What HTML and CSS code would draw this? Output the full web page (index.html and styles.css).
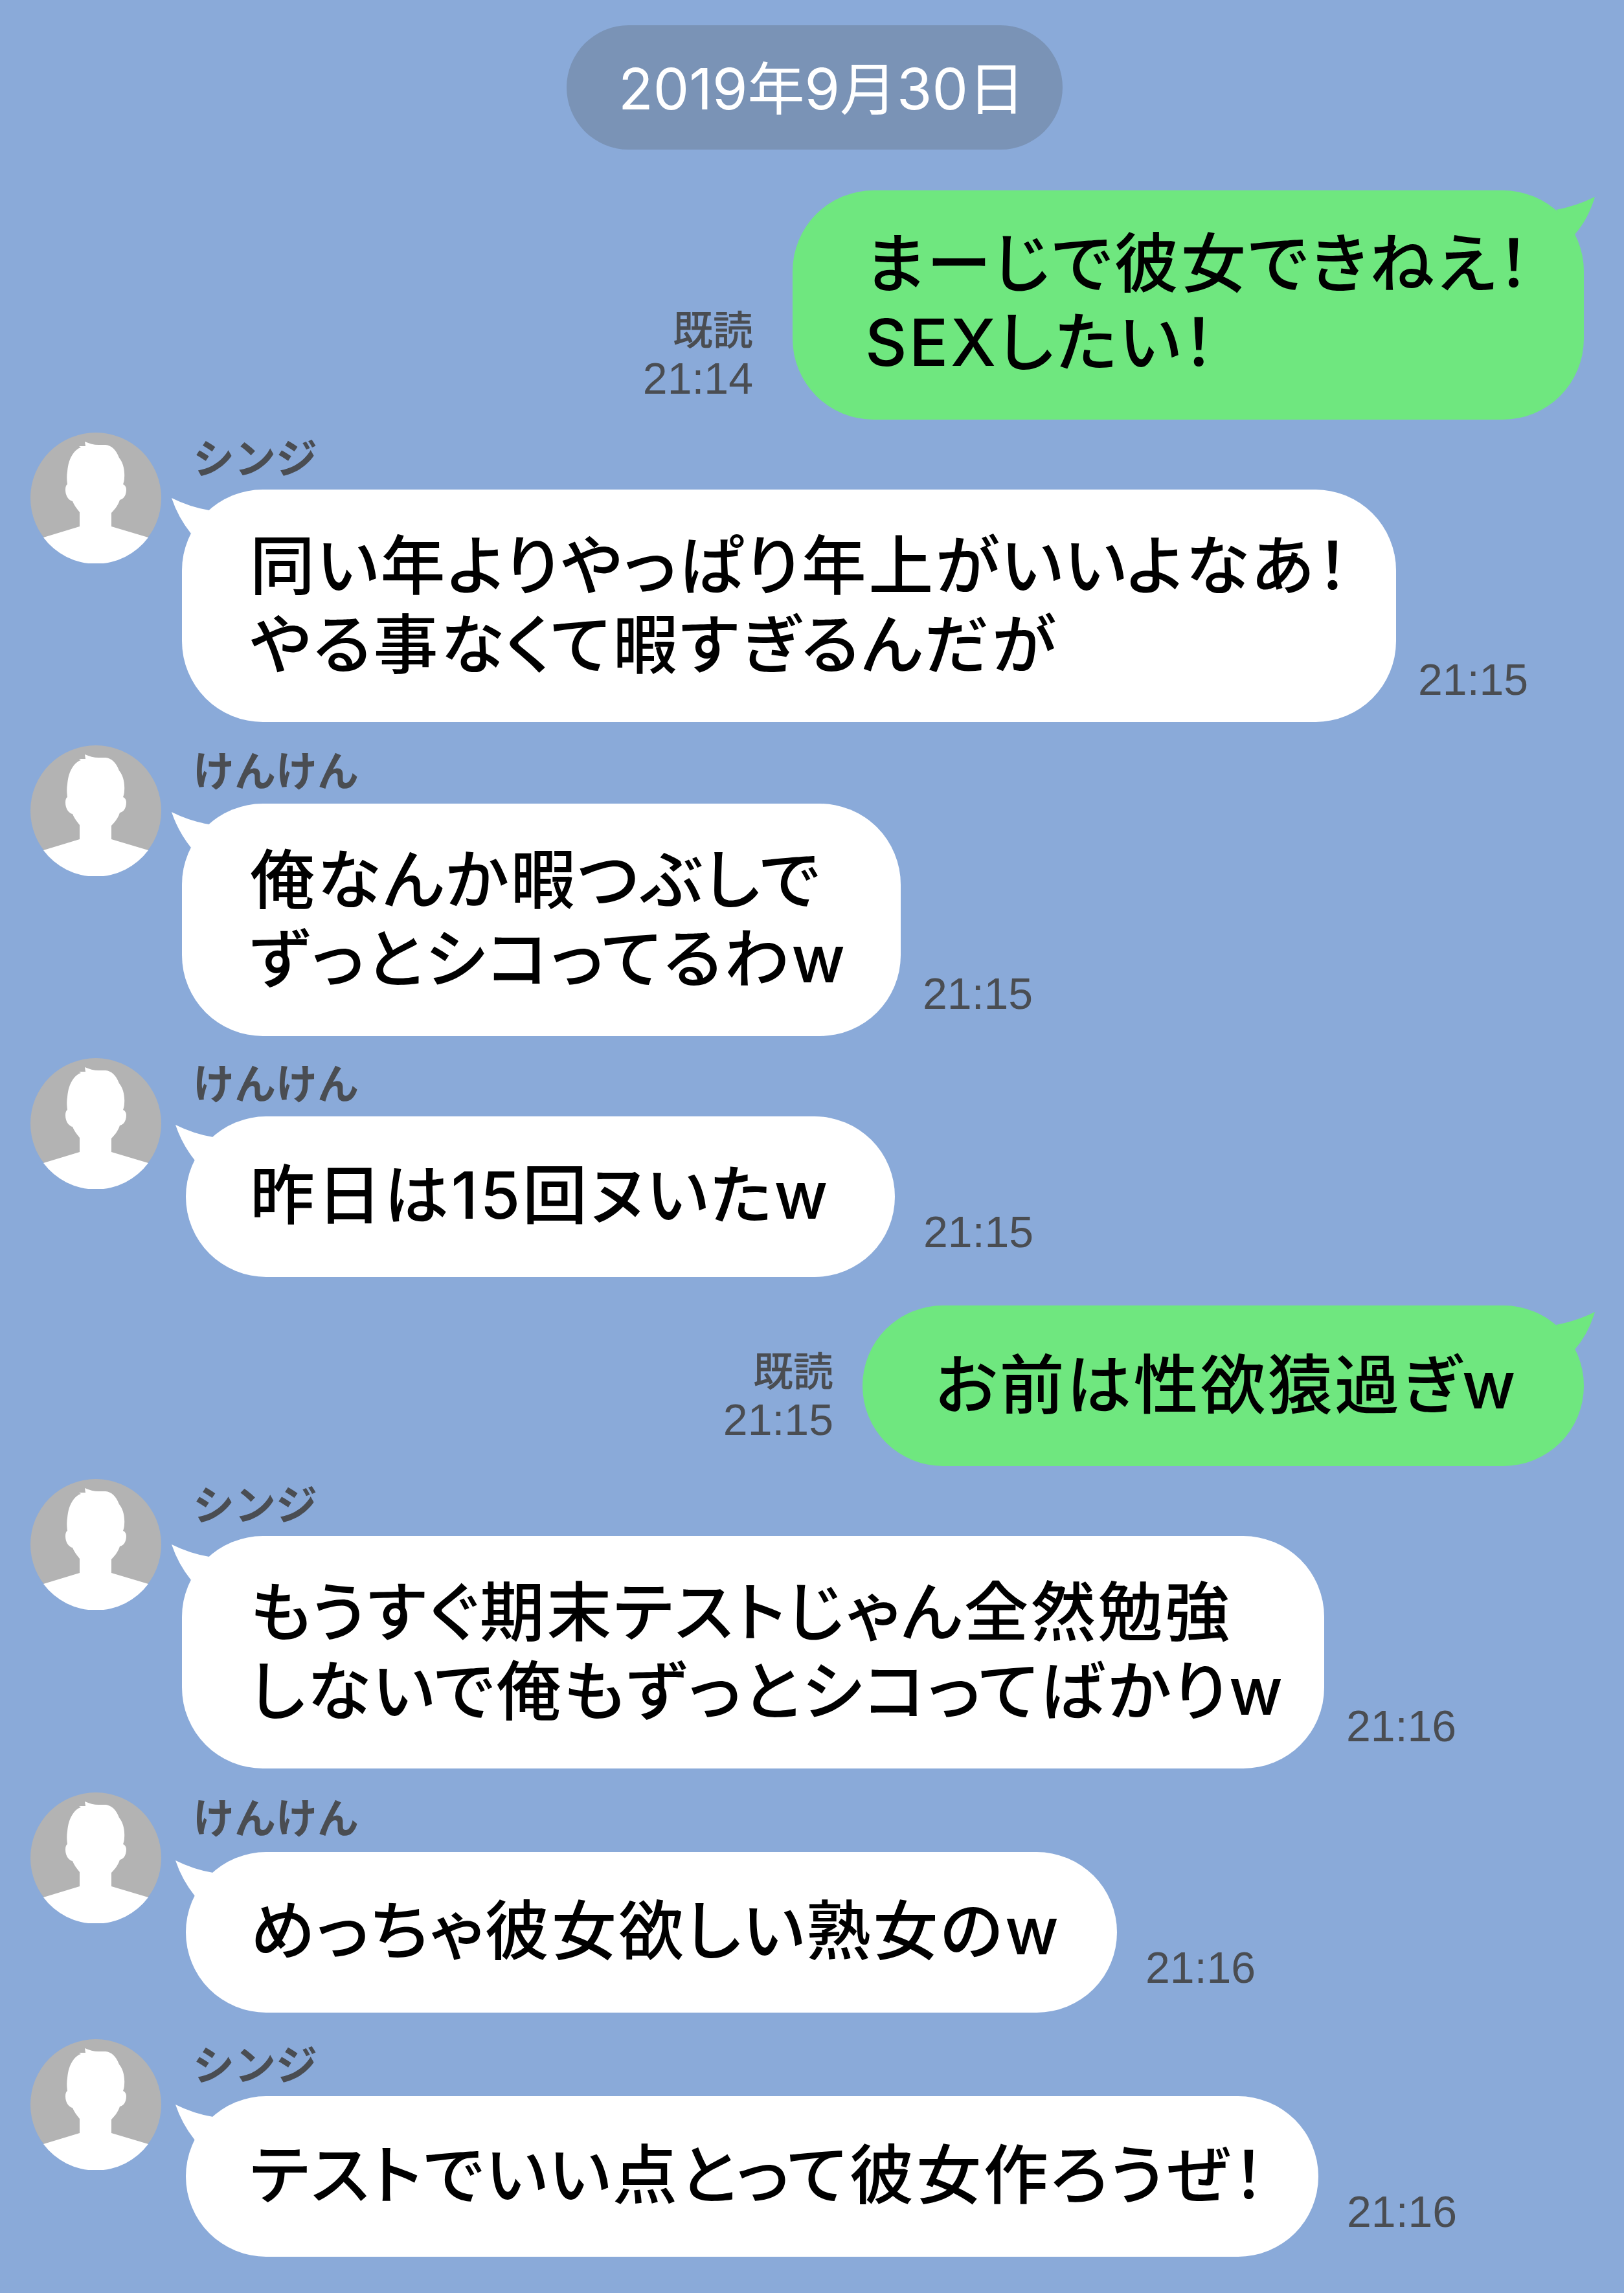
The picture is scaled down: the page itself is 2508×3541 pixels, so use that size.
FILE: index.html
```html
<!DOCTYPE html>
<html lang="ja">
<head>
    <meta charset="UTF-8">
    <title>トーク</title>
    <link rel="stylesheet" href="styles.css">
</head>
<body>
    <svg class="defs" width="0" height="0">
        <defs>
            <g id="person">
                <circle cx="101" cy="101" r="101" fill="#b3b3b3"/>
                <path fill="#fff" d="M20 162 L76 145 L76 123 C71 117 67 111 65 106 C60 105 54 99 54 88 C54 84 55 81 57 80 C56 72 56 66 57 60 C58 50 60 40 67 31 C70 27 74 24 78 23 L75 21 L85 21 L84 14 C91 17 98 19 105 19 L116 19 C125 20 132 26 137 39 C143 46 146 58 145 70 C145 74 144 77 143 80 C146 81 148 84 148 88 C148 98 143 103 138 104 C136 111 131 118 125 124 L125 145 L182 162 A101 101 0 0 1 20 162 Z"/>
            </g>
        </defs>
    </svg>

    <main class="chat">
        <div class="date">2019年9月30日</div>

        <div class="row sent first">
            <div class="meta wide"><span>既読</span><span>21:14</span></div>
            <div class="bubble green w-1222">
                <svg class="tail" viewBox="0 0 60 60"><path d="M60 0 Q32 14 0 20 L29 58 Q50 34 60 0 Z"/></svg>
                まーじで彼女できねえ！<br>SEXしたい！
            </div>
        </div>

        <div class="row gap-20">
            <svg class="avatar" viewBox="0 0 202 202"><use href="#person"/></svg>
            <div class="body">
                <div class="name">シンジ</div>
                <div class="line">
                    <div class="bubble w-1875">
                        <svg class="tail" viewBox="0 0 60 60"><path d="M0 0 Q28 14 58 19 L30 55 Q10 30 0 0 Z"/></svg>
                        同い年よりやっぱり年上がいいよなあ！<br>やる事なくて暇すぎるんだが
                    </div>
                    <div class="time">21:15</div>
                </div>
            </div>
        </div>

        <div class="row gap-36">
            <svg class="avatar" viewBox="0 0 202 202"><use href="#person"/></svg>
            <div class="body">
                <div class="name tall">けんけん</div>
                <div class="line">
                    <div class="bubble w-1110">
                        <svg class="tail" viewBox="0 0 60 60"><path d="M0 0 Q28 14 58 19 L30 55 Q10 30 0 0 Z"/></svg>
                        俺なんか暇つぶしで<br>ずっとシコってるわw
                    </div>
                    <div class="time">21:15</div>
                </div>
            </div>
        </div>

        <div class="row gap-34">
            <svg class="avatar" viewBox="0 0 202 202"><use href="#person"/></svg>
            <div class="body">
                <div class="name tall">けんけん</div>
                <div class="line single">
                    <div class="bubble w-1095">
                        <svg class="tail" viewBox="0 0 60 60"><path d="M0 0 Q28 14 58 19 L30 55 Q10 30 0 0 Z"/></svg>
                        昨日は15回ヌいたw
                    </div>
                    <div class="time">21:15</div>
                </div>
            </div>
        </div>

        <div class="row sent gap-44">
            <div class="meta"><span>既読</span><span>21:15</span></div>
            <div class="bubble green one w-1114">
                <svg class="tail" viewBox="0 0 60 60"><path d="M60 0 Q32 14 0 20 L29 58 Q50 34 60 0 Z"/></svg>
                お前は性欲猿過ぎw
            </div>
        </div>

        <div class="row gap-20">
            <svg class="avatar" viewBox="0 0 202 202"><use href="#person"/></svg>
            <div class="body">
                <div class="name">シンジ</div>
                <div class="line">
                    <div class="bubble w-1764">
                        <svg class="tail" viewBox="0 0 60 60"><path d="M0 0 Q28 14 58 19 L30 55 Q10 30 0 0 Z"/></svg>
                        もうすぐ期末テストじゃん全然勉強<br>しないで俺もずっとシコってばかりw
                    </div>
                    <div class="time">21:16</div>
                </div>
            </div>
        </div>

        <div class="row gap-37">
            <svg class="avatar" viewBox="0 0 202 202"><use href="#person"/></svg>
            <div class="body">
                <div class="name taller">けんけん</div>
                <div class="line single">
                    <div class="bubble w-1438">
                        <svg class="tail" viewBox="0 0 60 60"><path d="M0 0 Q28 14 58 19 L30 55 Q10 30 0 0 Z"/></svg>
                        めっちゃ彼女欲しい熟女のw
                    </div>
                    <div class="time">21:16</div>
                </div>
            </div>
        </div>

        <div class="row gap-41">
            <svg class="avatar" viewBox="0 0 202 202"><use href="#person"/></svg>
            <div class="body">
                <div class="name">シンジ</div>
                <div class="line single">
                    <div class="bubble w-1749">
                        <svg class="tail" viewBox="0 0 60 60"><path d="M0 0 Q28 14 58 19 L30 55 Q10 30 0 0 Z"/></svg>
                        テストでいい点とって彼女作ろうぜ！
                    </div>
                    <div class="time">21:16</div>
                </div>
            </div>
        </div>
    </main>
</body>
</html>
```

FILE: styles.css
```css
html, body {
    margin: 0;
    padding: 0;
}
body {
    background: #8aaad9;
    font-family: "Inter", "Noto Sans CJK JP", sans-serif;
    color: #000;
}
.defs {
    display: block;
    height: 0;
}
.chat {
    display: flex;
    flex-direction: column;
    width: 2508px;
    height: 3541px;
    padding-top: 39px;
    box-sizing: border-box;
    overflow: hidden;
}
.date {
    align-self: center;
    margin-left: 8px;
    width: 766px;
    height: 192px;
    padding-left: 22px;
    box-sizing: border-box;
    border-radius: 96px;
    background: #7a93b6;
    color: #fff;
    font-size: 88px;
    line-height: 196px;
    text-align: center;
}
.row {
    display: flex;
    align-items: flex-start;
    padding-left: 47px;
}
.row.sent {
    justify-content: flex-end;
    align-items: flex-end;
    padding-right: 62px;
}
.first { margin-top: 63px; }
.gap-20 { margin-top: 20px; }
.gap-34 { margin-top: 34px; }
.gap-36 { margin-top: 36px; }
.gap-37 { margin-top: 37px; }
.gap-41 { margin-top: 41px; }
.gap-44 { margin-top: 44px; }
.avatar {
    flex: none;
    width: 202px;
    height: 202px;
}
.body {
    margin-left: 32px;
}
.name {
    height: 88px;
    margin-left: 17px;
    color: #4a4d52;
    font-size: 64px;
    font-weight: 700;
    line-height: 80px;
}
.name.tall { height: 90px; }
.name.taller { height: 92px; }
.line {
    display: flex;
    align-items: flex-end;
}
.bubble {
    position: relative;
    box-sizing: border-box;
    height: 359px;
    padding: 57px 0 0 105px;
    border-radius: 125px;
    background: #fff;
    font-size: 100px;
    font-weight: 500;
    font-feature-settings: "palt";
    letter-spacing: 3.5px;
    line-height: 122px;
    white-space: nowrap;
}
.w-1095 { width: 1095px; }
.w-1110 { width: 1110px; }
.w-1114 { width: 1114px; }
.w-1222 { width: 1222px; }
.w-1438 { width: 1438px; }
.w-1749 { width: 1749px; }
.w-1764 { width: 1764px; }
.w-1875 { width: 1875px; }
.bubble .tail {
    position: absolute;
    left: -16px;
    top: 13px;
    width: 60px;
    height: 60px;
    fill: #fff;
}
.bubble.green {
    height: 354px;
    padding: 52px 0 0 112px;
    background: #6fe77f;
}
.bubble.green.one {
    height: 248px;
    padding: 62px 0 0 112px;
    border-radius: 124px;
}
.bubble.green .tail {
    left: auto;
    right: -17px;
    top: 10px;
    fill: #6fe77f;
}
.line.single .bubble {
    height: 248px;
    margin-left: 6px;
    padding: 61px 0 0 99px;
    border-radius: 124px;
}
.time {
    margin: 0 0 26px 34px;
    color: #4a4d52;
    font-family: "Liberation Sans", sans-serif;
    font-size: 68px;
    line-height: 80px;
}
.line.single .time {
    margin: 0 0 30px 44px;
}
.meta {
    display: flex;
    flex-direction: column;
    align-items: flex-end;
    margin: 0 45px 36px 0;
    color: #4a4d52;
    font-family: "Liberation Sans", "Noto Sans CJK JP", sans-serif;
    font-size: 68px;
    line-height: 72px;
}
.meta.wide {
    margin: 0 61px 28px 0;
}
.meta span:first-child {
    font-size: 62px;
    font-weight: 500;
}
```
